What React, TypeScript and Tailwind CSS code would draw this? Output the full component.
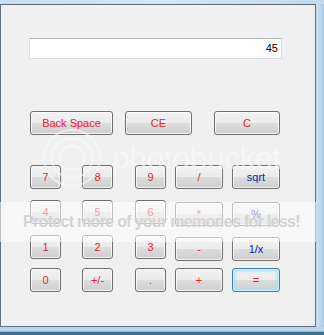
import React from "react";

type BtnProps = {
  label: string;
  w: string;
  blue?: boolean;
  focused?: boolean;
  className?: string;
};

function CalcButton({ label, w, blue, focused, className }: BtnProps) {
  const base =
    "h-[24px] flex items-center justify-center rounded-[3px] border text-[11px] leading-none bg-[linear-gradient(to_bottom,#f2f2f2_0%,#ebebeb_50%,#dddddd_50%,#cfcfcf_100%)]";
  const ring = focused
    ? "border-[#3c7fb1] shadow-[inset_0_0_0_1px_#c8f1fb,inset_0_0_3px_2px_#a3e1f2]"
    : "border-[#707070] shadow-[inset_0_0_0_1px_rgba(255,255,255,0.75)]";
  const color = blue ? "text-[#1414b4]" : "text-[#e8202c]";
  return (
    <button className={`${base} ${ring} ${color} ${w} ${className ?? ""}`}>
      {label}
    </button>
  );
}

export default function App() {
  return (
    <div className="relative w-[324px] h-[335px] overflow-hidden bg-[#bcd6ec] font-['Liberation_Sans',Arial,sans-serif]">
      <div className="h-[4px] bg-[linear-gradient(to_right,#c9dcee,#d6e6f4,#c2d8ec)]" />
      <div className="flex">
        <div className="w-[316px] h-[323px] border border-[#5f7082] bg-[#f0f0f0] flex flex-col">
          {/* display */}
          <div className="ml-[28px] mt-[33px] w-[253px] h-[21px] bg-white border border-[#dcdde2] border-t-[#b5b7bd] flex items-center justify-end pr-[3px] text-[11px] text-black">
            45
          </div>

          {/* Back Space / CE / C */}
          <div className="flex mt-[52px] ml-[29px]">
            <CalcButton label="Back Space" w="w-[83px]" />
            <CalcButton label="CE" w="w-[67px]" className="ml-[12px]" />
            <CalcButton label="C" w="w-[66px]" className="ml-[22px]" />
          </div>

          <div className="flex items-start mt-[30px] ml-[29px]">
            <CalcButton label="7" w="w-[31px]" />
            <CalcButton label="8" w="w-[31px]" className="ml-[21px]" />
            <CalcButton label="9" w="w-[31px]" className="ml-[22px]" />
            <CalcButton label="/" w="w-[48px]" className="ml-[9px]" />
            <CalcButton label="sqrt" w="w-[48px]" blue className="ml-[9px]" />
          </div>

          <div className="flex items-start mt-[11px] ml-[29px]">
            <CalcButton label="4" w="w-[31px]" />
            <CalcButton label="5" w="w-[31px]" className="ml-[21px]" />
            <CalcButton label="6" w="w-[31px]" className="ml-[22px]" />
            <CalcButton label="*" w="w-[48px]" className="ml-[9px] mt-[2px]" />
            <CalcButton label="%" w="w-[48px]" blue className="ml-[9px] mt-[2px]" />
          </div>

          <div className="flex items-start mt-[9px] ml-[29px]">
            <CalcButton label="1" w="w-[31px]" />
            <CalcButton label="2" w="w-[31px]" className="ml-[21px]" />
            <CalcButton label="3" w="w-[31px]" className="ml-[22px]" />
            <CalcButton label="-" w="w-[48px]" className="ml-[9px] mt-[2px]" />
            <CalcButton label="1/x" w="w-[48px]" blue className="ml-[9px] mt-[2px]" />
          </div>

          <div className="flex items-start mt-[7px] ml-[29px]">
            <CalcButton label="0" w="w-[31px]" />
            <CalcButton label="+/-" w="w-[31px]" className="ml-[21px]" />
            <CalcButton label="." w="w-[31px]" className="ml-[22px]" />
            <CalcButton label="+" w="w-[48px]" className="ml-[9px]" />
            <CalcButton label="=" w="w-[48px]" focused className="ml-[9px]" />
          </div>
        </div>
        <div className="w-[8px] h-[323px] bg-[linear-gradient(to_right,#cfe1f1,#bcd5ea_60%,#a9c7e2)]" />
      </div>
      <div className="h-[4px] bg-[#b8d4ec]" />
      <div className="h-[1px] bg-[#8fb6d8]" />
      <div className="h-[3px] bg-[#3f6f8e]" />

      {/* watermark overlay */}
      <div className="pointer-events-none absolute left-[40px] top-[128px] flex items-center gap-[6px] opacity-60">
        <svg width="64" height="60" viewBox="0 0 64 60" fill="none">
          <circle cx="32" cy="30" r="28" stroke="#fbfbfb" strokeWidth="2" />
          <circle cx="32" cy="30" r="20" stroke="#fbfbfb" strokeWidth="2" />
          <circle cx="32" cy="30" r="12" stroke="#fbfbfb" strokeWidth="2" />
        </svg>
        <span className="text-[32px] text-[#fafafa] tracking-[-0.5px] ml-[2px]">photobucket</span>
      </div>
      <div className="pointer-events-none absolute left-0 top-[202px] w-[316px] h-[40px] bg-white/55 flex items-center justify-center pl-[7px]">
        <span className="text-[16px] font-bold text-[#d4d4d4] tracking-[-0.7px] whitespace-nowrap">
          Protect more of your memories for less!
        </span>
      </div>
    </div>
  );
}
